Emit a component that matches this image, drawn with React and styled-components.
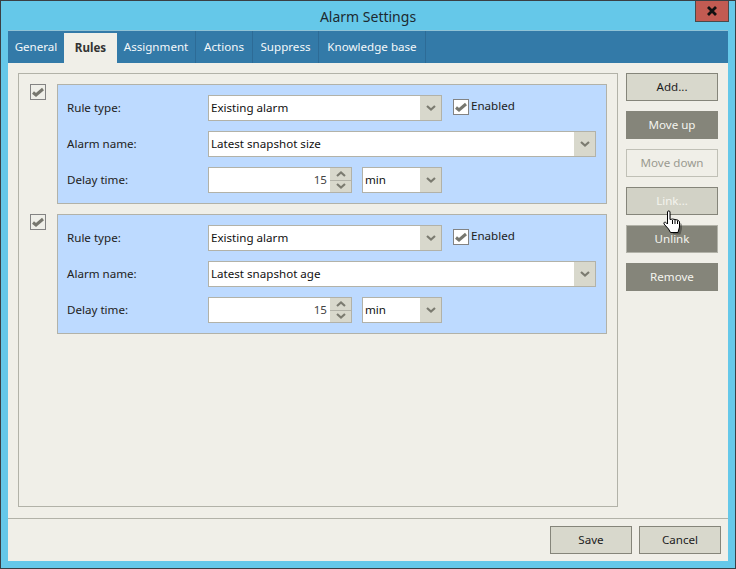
import React from 'react';
import styled, { createGlobalStyle } from 'styled-components';

const Global = createGlobalStyle`
  html, body { margin: 0; padding: 0; background: #65c8e9; }
  * { box-sizing: border-box; }
`;
const Win = styled.div`
  position: relative; width: 736px; height: 569px; background: #65c8e9;
  border: 1px solid #3a3f44;
  padding: 0 7px 7px 7px; display: flex; flex-direction: column;
  font-family: "Noto Sans", sans-serif; font-size: 11.6px; color: #1c1c1c;
`;
const Title = styled.div`
  height: 30px; display: flex; align-items: center; justify-content: center;
  font-size: 14px; color: #1d2a30; position: relative; padding-top: 1px;
`;
const Close = styled.div`
  position: absolute; right: -1px; top: 0; width: 34px; height: 21px;
  background: #c25b52; border: 1px solid #4a4a4a; border-top: 0;
  display: flex; align-items: center; justify-content: center;
`;
const Body = styled.div`flex: 1; background: #f0efe8; display: flex; flex-direction: column; border-top: 1px solid #8fc3d6;`;
const Tabs = styled.div`height: 32px; background: #337aa8; display: flex; align-items: flex-end;`;
const Tab = styled.div`
  height: ${p => p.$active ? 30 : 32}px; width: ${p => p.$w}px;
  display: flex; align-items: center; justify-content: center;
  background: ${p => p.$active ? '#f0efe8' : 'transparent'};
  color: ${p => p.$active ? '#333' : '#f4f8fa'};
  font-weight: ${p => p.$active ? 700 : 400};
  border-right: ${p => p.$sep ? '1px solid #2d6b96' : '0'};
  padding-bottom: ${p => p.$active ? 2 : 1}px;
`;
const Main = styled.div`flex: 1; display: flex; padding: 10px 10px 0 10px; gap: 8px;`;
const Frame = styled.div`
  width: 600px; height: 434px; border: 1px solid #b2b2a8; padding: 10px 10px 0 11px;
  display: flex; flex-direction: column; gap: 10px;
`;
const Rule = styled.div`display: flex; gap: 11px; align-items: flex-start;`;
const Card = styled.div`
  width: 550px; height: 120px; background: #bddaff; border: 1px solid #b2b2a8;
  padding: 10px 10px 0 9px; display: flex; flex-direction: column; gap: 10px;
`;
const Row = styled.div`display: flex; align-items: center; height: 26px;`;
const Label = styled.div`width: 141px; color: #222; padding-bottom: 2px;`;
const Check = styled.div`
  width: 16px; height: 16px; border: 1px solid #838383;
  display: flex; align-items: center; justify-content: center; flex: none;
  background: ${p => p.$grey ? '#efefe9' : '#fff'};
`;
const Field = styled.div`
  width: ${p => p.$w}px; height: 26px; background: #fff; border: 1px solid #b2b2a8;
  display: flex; align-items: stretch; color: #111;
`;
const FieldText = styled.div`flex: 1; display: flex; align-items: center; padding: 0 0 2px 2px;`;
const Arrow = styled.div`width: 21px; background: #d8d8cc; display: flex; align-items: center; justify-content: center;`;
const Enabled = styled.div`display: flex; align-items: center; gap: 2px; margin-left: 11px; margin-top: -2px; color: #222;`;
const EnabledText = styled.span`margin-bottom: 4px;`;
const Spin = styled.div`
  width: 144px; height: 26px; background: #fff; border: 1px solid #b2b2a8; margin-right: 10px; display: flex;
`;
const SpinValue = styled.div`flex: 1; display: flex; align-items: center; justify-content: flex-end; padding: 0 3px 2px 0; color: #444;`;
const SpinBtns = styled.div`width: 21px; background: #d8d8cc; display: flex; flex-direction: column;`;
const SpinBtn = styled.div`
  flex: 1; display: flex; align-items: center; justify-content: center;
  &:first-child { border-bottom: 1px solid #b2b2a8; }
`;
const Side = styled.div`display: flex; flex-direction: column; gap: 10px;`;
const Btn = styled.div`
  width: ${p => p.$w || 92}px; height: 28px; display: flex; align-items: center; justify-content: center;
  padding-bottom: 2px;
  border: 1px solid ${p => ({ normal: '#85857a', dark: '#85857a', dis: '#c0c0b6', hover: '#85857a', unlink: '#b2b2a8' }[p.$kind || 'normal'])};
  background: ${p => ({ normal: '#d8d8cc', dark: '#85857a', dis: '#f0efe8', hover: '#d2d2c6', unlink: '#85857a' }[p.$kind || 'normal'])};
  color: ${p => ({ normal: '#1c1c1c', dark: '#f4f4ee', dis: '#9a9a90', hover: '#f4f4ee', unlink: '#f4f4ee' }[p.$kind || 'normal'])};
`;
const Footer = styled.div`
  height: 43px; margin-top: 11px; border-top: 1px solid #b2b2a8;
  display: flex; justify-content: flex-end; gap: 7px; padding: 7px 7px 0 0;
`;
const Cursor = styled.svg`position: absolute; left: 661px; top: 209px;`;

const Chev = ({ up }) => (
  <svg width="10" height="6" viewBox="0 0 10 6">
    <path d={up ? 'M1 5L5 1.500L9 5' : 'M1 1L5 4.500L9 1'} fill="none" stroke="#7b7b70" strokeWidth="2.200" />
  </svg>
);
const Tick = () => (
  <svg width="14" height="12" viewBox="0 0 14 12">
    <path d="M2 6.500L5 9L12 3" fill="none" stroke="#77776f" strokeWidth="3" />
  </svg>
);
const Select = ({ w, children }) => (
  <Field $w={w}><FieldText>{children}</FieldText><Arrow><Chev /></Arrow></Field>
);
const RuleBlock = ({ name }) => (
  <Rule>
    <Check $grey><Tick /></Check>
    <Card>
      <Row>
        <Label>Rule type:</Label>
        <Select w={234}>Existing alarm</Select>
        <Enabled><Check><Tick /></Check><EnabledText>Enabled</EnabledText></Enabled>
      </Row>
      <Row><Label>Alarm name:</Label><Select w={388}>{name}</Select></Row>
      <Row>
        <Label>Delay time:</Label>
        <Spin>
          <SpinValue>15</SpinValue>
          <SpinBtns>
            <SpinBtn><Chev up /></SpinBtn>
            <SpinBtn><Chev /></SpinBtn>
          </SpinBtns>
        </Spin>
        <Select w={80}>min</Select>
      </Row>
    </Card>
  </Rule>
);

export default function App() {
  return (
    <Win>
      <Global />
      <Title>
        Alarm Settings
        <Close>
          <svg width="12" height="10" viewBox="0 0 12 10"><path d="M2 1L10 9M10 1L2 9" stroke="#111" strokeWidth="2.800" fill="none" /></svg>
        </Close>
      </Title>
      <Body>
        <Tabs>
          <Tab $w={56}>General</Tab>
          <Tab $w={53} $active>Rules</Tab>
          <Tab $w={79} $sep>Assignment</Tab>
          <Tab $w={57} $sep>Actions</Tab>
          <Tab $w={66} $sep>Suppress</Tab>
          <Tab $w={107} $sep>Knowledge base</Tab>
        </Tabs>
        <Main>
          <Frame>
            <RuleBlock name="Latest snapshot size" />
            <RuleBlock name="Latest snapshot age" />
          </Frame>
          <Side>
            <Btn>Add...</Btn>
            <Btn $kind="dark">Move up</Btn>
            <Btn $kind="dis">Move down</Btn>
            <Btn $kind="hover">Link...</Btn>
            <Btn $kind="unlink">Unlink</Btn>
            <Btn $kind="dark">Remove</Btn>
          </Side>
        </Main>
        <Footer>
          <Btn $w={82}>Save</Btn>
          <Btn $w={82}>Cancel</Btn>
        </Footer>
      </Body>
      <Cursor width="21" height="25" viewBox="0 0 21 25">
        <path d="M7.500 3V11L10 10.500L13 11L16 11.500L18.500 13V18L17 23.500H10L8 20L3.500 15C3 13 4.500 12.500 6 14L7 15V3Z" fill="#000" fillOpacity=".3" transform="translate(1.500 1)" />
        <path d="M5.500 2C5.500 .5 8 .5 8 2V9.500L10.500 9L13 9.500L15.500 10L17.500 11.500V17L16 22.500H8.500L6.500 19L2 14C1.500 12 3 11.500 4.500 13L5.500 14Z" fill="#fff" stroke="#000" strokeWidth="1" />
        <path d="M10.500 10V14M13 10V14M15.500 10.500V14" stroke="#000" strokeWidth="1" />
      </Cursor>
    </Win>
  );
}
